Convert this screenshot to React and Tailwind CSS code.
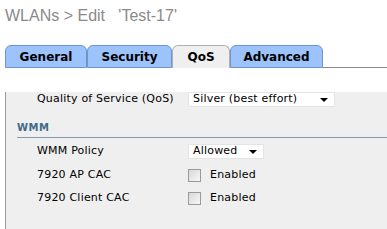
export default function App() {
  const tabs = [
    { label: 'General', w: 'w-[82px]' },
    { label: 'Security', w: 'w-[85px]' },
    { label: 'QoS', w: 'w-[58px]', active: true },
    { label: 'Advanced', w: 'w-[93px]' },
  ];

  return (
    <div className="w-[387px] h-[229px] bg-white overflow-hidden" style={{ fontFamily: '"DejaVu Sans", Verdana, sans-serif' }}>
      <div className="pl-[5px] pt-[4px] h-[45px] text-[16px] text-[#8a8a8a] whitespace-pre" style={{ fontFamily: '"Liberation Sans", Arial, sans-serif' }}>
        {"WLANs > Edit   'Test-17'"}
      </div>

      <div className="flex pl-[5px] h-[23px]">
        {tabs.map((t) =>
          t.active ? (
            <div
              key={t.label}
              className={`${t.w} h-[23px] rounded-t-[6px] border border-b-0 border-[#b0b0b0] bg-[#efefef] flex items-center justify-center text-[12px] font-bold text-black`}
            >
              {t.label}
            </div>
          ) : (
            <div
              key={t.label}
              className={`${t.w} h-[23px] rounded-t-[6px] border border-[#6f95c9] bg-[#9cc3fb] flex items-center justify-center text-[12px] font-bold text-black`}
            >
              {t.label}
            </div>
          )
        )}
        <div className="flex-1 border-b border-[#8a8a8a]" />
      </div>

      <div className="ml-[5px] h-[161px] border-l border-[#9a9a9a] bg-[#efefef] text-[11px] tracking-[0.2px] text-black">
        <div className="flex items-center h-[15px] mt-[24px]">
          <div className="w-[182px] pl-[31px]">Quality of Service (QoS)</div>
          <div className="w-[147px] h-[15px] bg-white border border-[#e4e4e4] flex items-center justify-between pl-[4px] pr-[6px]">
            <span>Silver (best effort)</span>
            <span className="w-0 h-0 border-l-[4px] border-r-[4px] border-t-[4px] border-l-transparent border-r-transparent border-t-black" />
          </div>
        </div>

        <div className="ml-[11px] mt-[13px] pb-[2px] border-b border-[#7f9db9] text-[10px] font-bold text-[#3f6a8c] tracking-[0.5px]">
          WMM
        </div>

        <div className="flex items-center h-[15px] mt-[6px]">
          <div className="w-[182px] pl-[31px]">WMM Policy</div>
          <div className="w-[76px] h-[15px] bg-white border border-[#e4e4e4] flex items-center justify-between pl-[4px] pr-[6px]">
            <span>Allowed</span>
            <span className="w-0 h-0 border-l-[4px] border-r-[4px] border-t-[4px] border-l-transparent border-r-transparent border-t-black" />
          </div>
        </div>

        <div className="flex items-center h-[14px] mt-[9px]">
          <div className="w-[182px] pl-[31px]">7920 AP CAC</div>
          <div className="w-[13px] h-[13px] border border-[#9a9a9a] bg-gradient-to-br from-[#d8d8d8] to-[#f8f8f8]" />
          <span className="ml-[9px]">Enabled</span>
        </div>

        <div className="flex items-center h-[14px] mt-[9px]">
          <div className="w-[182px] pl-[31px]">7920 Client CAC</div>
          <div className="w-[13px] h-[13px] border border-[#9a9a9a] bg-gradient-to-br from-[#d8d8d8] to-[#f8f8f8]" />
          <span className="ml-[9px]">Enabled</span>
        </div>
      </div>
    </div>
  );
}
